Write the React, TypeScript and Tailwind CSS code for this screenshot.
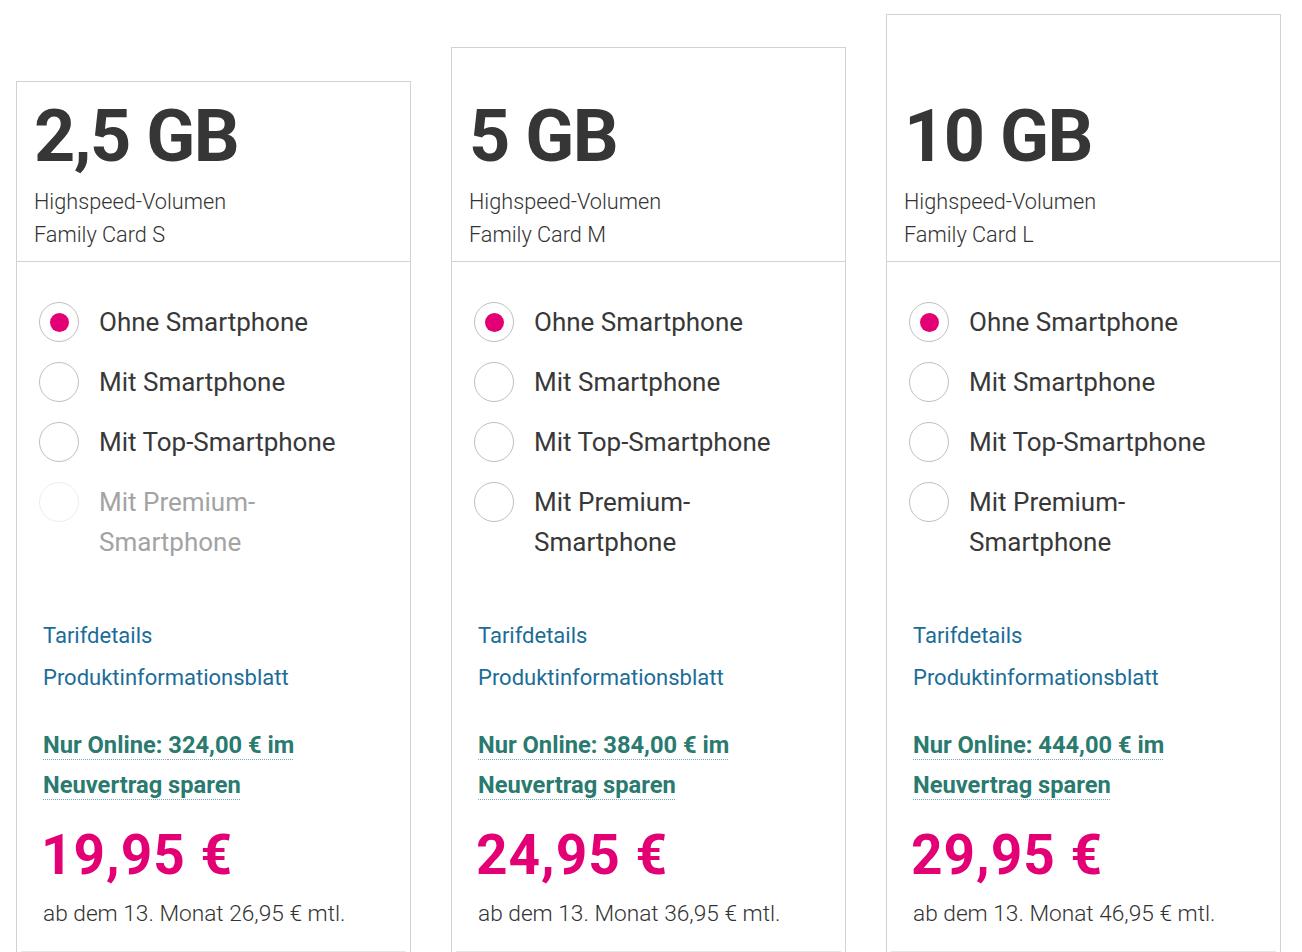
import React from "react";

type Plan = {
  gb: string;
  card: string;
  top: string;
  pt: string;
  online: string;
  price: string;
  later: string;
  premiumDisabled: boolean;
};

const plans: Plan[] = [
  { gb: "2,5 GB", card: "Family Card S", top: "mt-[81px]", pt: "pt-[19px]", online: "324,00", price: "19,95 €", later: "26,95", premiumDisabled: true },
  { gb: "5 GB", card: "Family Card M", top: "mt-[47px]", pt: "pt-[53px]", online: "384,00", price: "24,95 €", later: "36,95", premiumDisabled: false },
  { gb: "10 GB", card: "Family Card L", top: "mt-[14px]", pt: "pt-[86px]", online: "444,00", price: "29,95 €", later: "46,95", premiumDisabled: false },
];

function Radio({ checked, disabled }: { checked?: boolean; disabled?: boolean }) {
  return (
    <span
      className={
        "flex h-[40px] w-[40px] shrink-0 items-center justify-center rounded-full border bg-white " +
        (disabled ? "border-[#ededed]" : "border-[#bfbfbf]")
      }
    >
      {checked && <span className="h-[19px] w-[19px] rounded-full bg-[#e20074]" />}
    </span>
  );
}

function Option({ label, checked, disabled }: { label: React.ReactNode; checked?: boolean; disabled?: boolean }) {
  return (
    <div className="flex items-start gap-[20px]">
      <Radio checked={checked} disabled={disabled} />
      <span className={"text-[26px] leading-[40px] " + (disabled ? "text-[#a3a3a3]" : "text-[#383838]")}>{label}</span>
    </div>
  );
}

function Card({ p }: { p: Plan }) {
  return (
    <div className={"w-[395px] shrink-0 border border-[#d2d2d2] bg-white " + p.top}>
      <div className={"border-b border-[#d2d2d2] pl-[17px] pb-[10px] " + p.pt}>
        <div className="text-[72px] font-bold leading-[72px] tracking-[-1.5px] text-[#363636]">{p.gb}</div>
        <div className="mt-[12px] text-[21.7px] font-light leading-[33px] text-[#333333]">
          <div>Highspeed-Volumen</div>
          <div>{p.card}</div>
        </div>
      </div>
      <div className="flex flex-col gap-[20px] pl-[22px] pt-[40px]">
        <Option label="Ohne Smartphone" checked />
        <Option label="Mit Smartphone" />
        <Option label="Mit Top-Smartphone" />
        <Option
          label={
            <>
              Mit Premium-
              <br />
              Smartphone
            </>
          }
          disabled={p.premiumDisabled}
        />
      </div>
      <div className="pl-[26px] pt-[60px]">
        <div className="flex flex-col gap-[14px] text-[22px] leading-[28px] text-[#1b6d98]">
          <span>Tarifdetails</span>
          <span>Produktinformationsblatt</span>
        </div>
        <div className="mt-[33px] text-[23.7px] font-bold leading-[40px] text-[#2a7a70]">
          <div>
            <span className="underline decoration-dotted decoration-[#6fa9c4] decoration-1 underline-offset-[6px]">
              Nur Online: {p.online} € im
            </span>
          </div>
          <div>
            <span className="underline decoration-dotted decoration-[#6fa9c4] decoration-1 underline-offset-[6px]">
              Neuvertrag sparen
            </span>
          </div>
        </div>
        <div className="mt-[20px] ml-[-2px] text-[55px] font-bold leading-[60px] tracking-[1px] text-[#e20074]">{p.price}</div>
        <div className="mt-[15px] text-[22.7px] font-light leading-[28px] text-[#333333]">
          ab dem 13. Monat {p.later} € mtl.
        </div>
      </div>
      <div className="mx-[4px] mt-[23px] h-[60px] border-t border-[#e6e6e6]" />
    </div>
  );
}

export default function App() {
  return (
    <div
      className="h-[952px] w-[1302px] overflow-hidden bg-white"
      style={{ fontFamily: "Roboto, 'Liberation Sans', Arial, sans-serif" }}
    >
      <div className="flex items-start gap-[40px] pl-[16px]">
        {plans.map((p) => (
          <Card key={p.gb} p={p} />
        ))}
      </div>
    </div>
  );
}
